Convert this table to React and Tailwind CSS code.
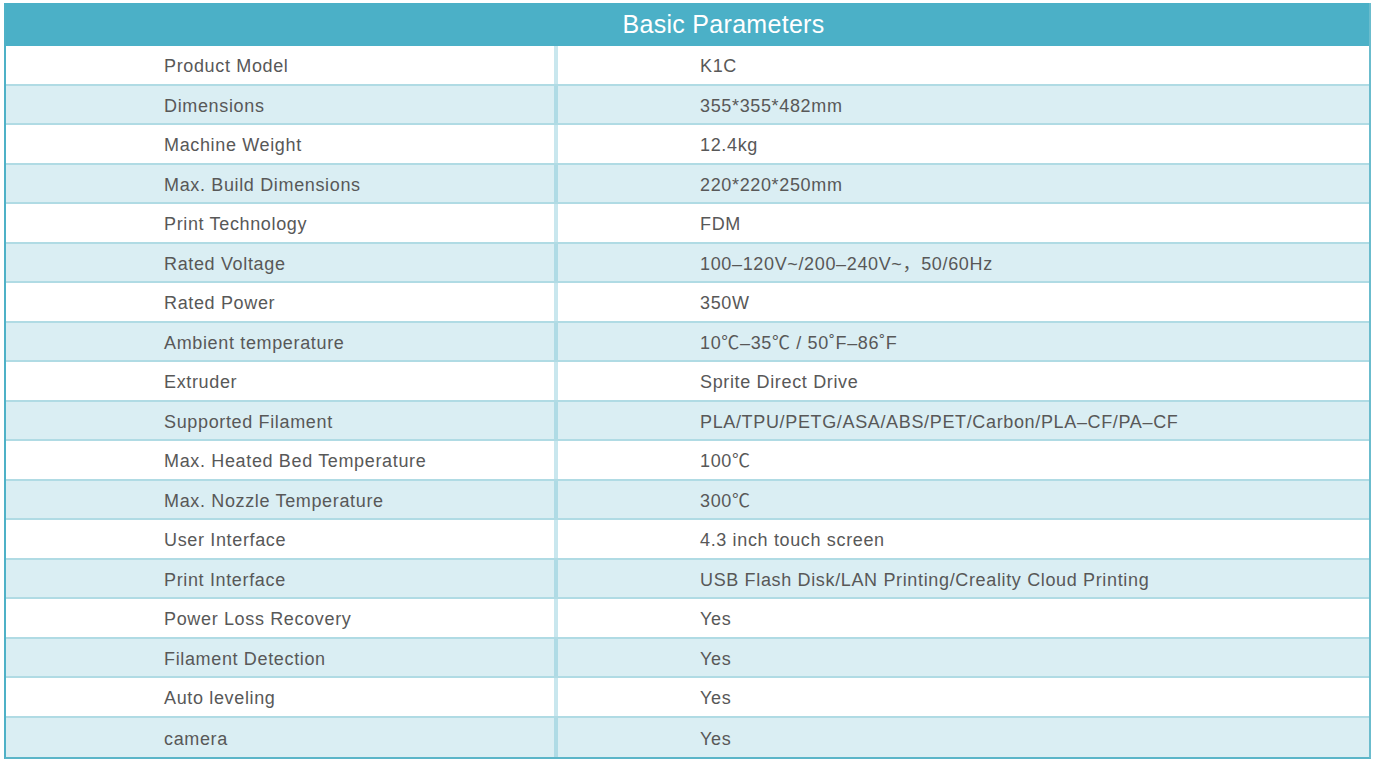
const rows = [
  ["Product Model", "K1C"],
  ["Dimensions", "355*355*482mm"],
  ["Machine Weight", "12.4kg"],
  ["Max. Build Dimensions", "220*220*250mm"],
  ["Print Technology", "FDM"],
  ["Rated Voltage", "100–120V~/200–240V~，50/60Hz"],
  ["Rated Power", "350W"],
  ["Ambient temperature", "10℃–35℃ / 50˚F–86˚F"],
  ["Extruder", "Sprite Direct Drive"],
  ["Supported Filament", "PLA/TPU/PETG/ASA/ABS/PET/Carbon/PLA–CF/PA–CF"],
  ["Max. Heated Bed Temperature", "100℃"],
  ["Max. Nozzle Temperature", "300℃"],
  ["User Interface", "4.3 inch touch screen"],
  ["Print Interface", "USB Flash Disk/LAN Printing/Creality Cloud Printing"],
  ["Power Loss Recovery", "Yes"],
  ["Filament Detection", "Yes"],
  ["Auto leveling", "Yes"],
  ["camera", "Yes"],
];

export default function App() {
  return (
    <div className="w-[1375px] h-[763px] bg-white pt-[3px] pl-[4px] font-['Liberation_Sans','Noto_Sans_CJK_SC',sans-serif]">
      <div className="w-[1367px] border-l-2 border-r-2 border-b-2 border-l-[#4eb1c7] border-r-[#6bbccd] border-b-[#5bb5c8]">
        <div className="h-[43px] bg-[#4bb0c7] flex items-center justify-center pl-[72px] text-white text-[25px] tracking-[0.3px]">
          Basic Parameters
        </div>
        {rows.map(([label, value], i) => (
          <div
            key={label}
            className={
              "flex h-[39.5px] border-b-2 border-[#b0dbe4] last:border-b-0 text-[18px] tracking-[0.65px] text-[#585858] " +
              (i % 2 === 1 ? "bg-[#daeef3]" : "bg-white")
            }
          >
            <div className="w-[548px] flex items-center pl-[158px] pt-[4px]">{label}</div>
            <div className="w-[4px] bg-[#4bb0c7]/30" />
            <div className="flex-1 flex items-center pl-[142px] pt-[4px]">{value}</div>
          </div>
        ))}
      </div>
    </div>
  );
}
